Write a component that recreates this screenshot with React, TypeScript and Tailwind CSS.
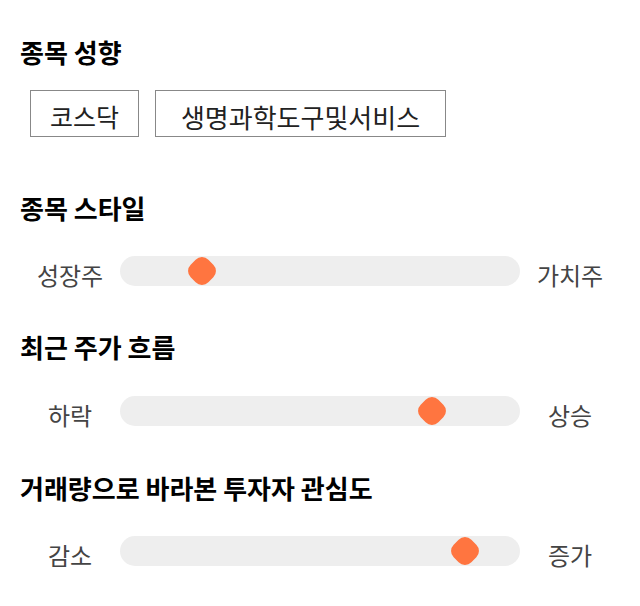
import React from "react";

const font = { fontFamily: '"Noto Sans CJK KR", "Noto Sans", sans-serif' };

function Slider({ left, right, pos }: { left: string; right: string; pos: number }) {
  return (
    <div className="flex items-center h-[30px]">
      <div className="w-[100px] text-center text-[24px] text-[#444] leading-none pt-[8px]">{left}</div>
      <div className="relative w-[400px] h-[30px] rounded-full bg-[#eeeeee]">
        <div
          className="absolute top-1/2 w-[25px] h-[25px] bg-[#ff7540] rounded-[9px]"
          style={{ left: `${pos}px`, transform: "translate(-50%, -50%) rotate(45deg)" }}
        />
      </div>
      <div className="w-[100px] text-center text-[24px] text-[#444] leading-none pt-[8px]">{right}</div>
    </div>
  );
}

export default function App() {
  return (
    <div className="bg-white w-[640px] h-[606px] pl-[20px] pt-[36px]" style={font}>
      <h2 className="text-[26px] font-bold leading-[32px] text-black">종목 성향</h2>
      <div className="flex gap-[16px] ml-[10px] mt-[22px]">
        <div className="w-[109px] h-[47px] border border-[#888] flex items-center justify-center pt-[6px] text-[25px] text-[#222]">코스닥</div>
        <div className="w-[291px] h-[47px] border border-[#888] flex items-center justify-center pt-[6px] text-[26px] text-[#222]">생명과학도구및서비스</div>
      </div>
      <h2 className="mt-[55px] text-[26px] font-bold leading-[32px] text-black">종목 스타일</h2>
      <div className="mt-[32px]">
        <Slider left="성장주" right="가치주" pos={82} />
      </div>
      <h2 className="mt-[45px] text-[26px] font-bold leading-[32px] text-black">최근 주가 흐름</h2>
      <div className="mt-[33px]">
        <Slider left="하락" right="상승" pos={312} />
      </div>
      <h2 className="mt-[46px] text-[26px] font-bold leading-[32px] text-black">거래량으로 바라본 투자자 관심도</h2>
      <div className="mt-[32px]">
        <Slider left="감소" right="증가" pos={345} />
      </div>
    </div>
  );
}
